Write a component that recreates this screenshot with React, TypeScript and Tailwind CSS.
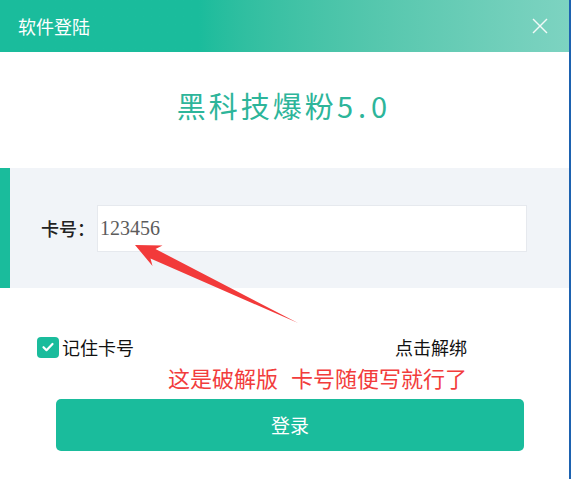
import React from "react";

const cjk = { fontFamily: '"Noto Sans CJK SC", "Noto Sans", sans-serif' };

export default function App() {
  return (
    <div className="relative w-[571px] h-[479px] flex bg-white overflow-hidden" style={cjk}>
      <div className="flex-1 flex flex-col">
        {/* Title bar */}
        <div className="h-[52px] flex items-center justify-between bg-linear-to-r from-[#1abc9c] from-35% to-[#7dd3c1] pl-[18px] pr-[21px]">
          <span className="text-[18px] leading-none text-white">软件登陆</span>
          <svg width="16" height="16" viewBox="0 0 16 16" className="opacity-90">
            <line x1="1" y1="1" x2="15" y2="15" stroke="white" strokeWidth="1.4" />
            <line x1="15" y1="1" x2="1" y2="15" stroke="white" strokeWidth="1.4" />
          </svg>
        </div>

        {/* Heading */}
        <div className="h-[116px] flex justify-center pt-[35px]">
          <h1 className="text-[29px] leading-[36px] tracking-[3px] text-[#2db59a] font-normal">
            黑科技爆粉<span className="tracking-[5px]">5.0</span>
          </h1>
        </div>

        {/* Input panel */}
        <div className="h-[120px] flex items-center bg-[#f1f4f8]">
          <div className="w-[10px] self-stretch bg-[#1abc9c]" />
          <span className="ml-[31px] w-[56px] text-[18px] text-[#222] font-medium">卡号：</span>
          <div className="w-[430px] h-[47px] bg-white border border-[#e6e9ee] flex items-center pl-[2px]">
            <span
              className="text-[20px] text-[#5c5c5c]"
              style={{ fontFamily: '"Liberation Serif", serif' }}
            >
              123456
            </span>
          </div>
        </div>

        {/* Options */}
        <div className="ml-[37px] w-[430px] mt-[48px] flex items-center justify-between h-[22px]">
          <div className="flex items-center">
            <div className="w-[22px] h-[21px] rounded-[4px] bg-[#1abc9c] flex items-center justify-center">
              <svg width="14" height="14" viewBox="0 0 14 14">
                <path d="M2.5 7.2l3 3 6-6.2" fill="none" stroke="white" strokeWidth="2.2" strokeLinecap="round" strokeLinejoin="round" />
              </svg>
            </div>
            <span className="ml-[3px] text-[18px] leading-none text-[#111]">记住卡号</span>
          </div>
          <span className="text-[18px] leading-none text-[#111]">点击解绑</span>
        </div>

        <div className="ml-[37px] w-[430px] mt-[6px] flex justify-end">
          <span className="text-[22px] leading-[26px] text-[#f23c3c]">
            这是破解版<span className="ml-[13px]">卡号随便写就行了</span>
          </span>
        </div>

        <button className="ml-[56px] mt-[9px] w-[468px] h-[52px] rounded-[5px] bg-[#1abc9c] text-white text-[19px] flex items-center justify-center">
          登录
        </button>
      </div>
      <div className="w-[2px] bg-[#1d62b0]" />

      {/* Annotation arrow */}
      <svg className="absolute left-0 top-0 pointer-events-none" width="571" height="479" viewBox="0 0 571 479">
        <polygon
          points="135,245 162.5,245.5 155.5,249 298,323 150.5,258.5 152.5,266"
          fill="#f23a3a"
        />
      </svg>
    </div>
  );
}
